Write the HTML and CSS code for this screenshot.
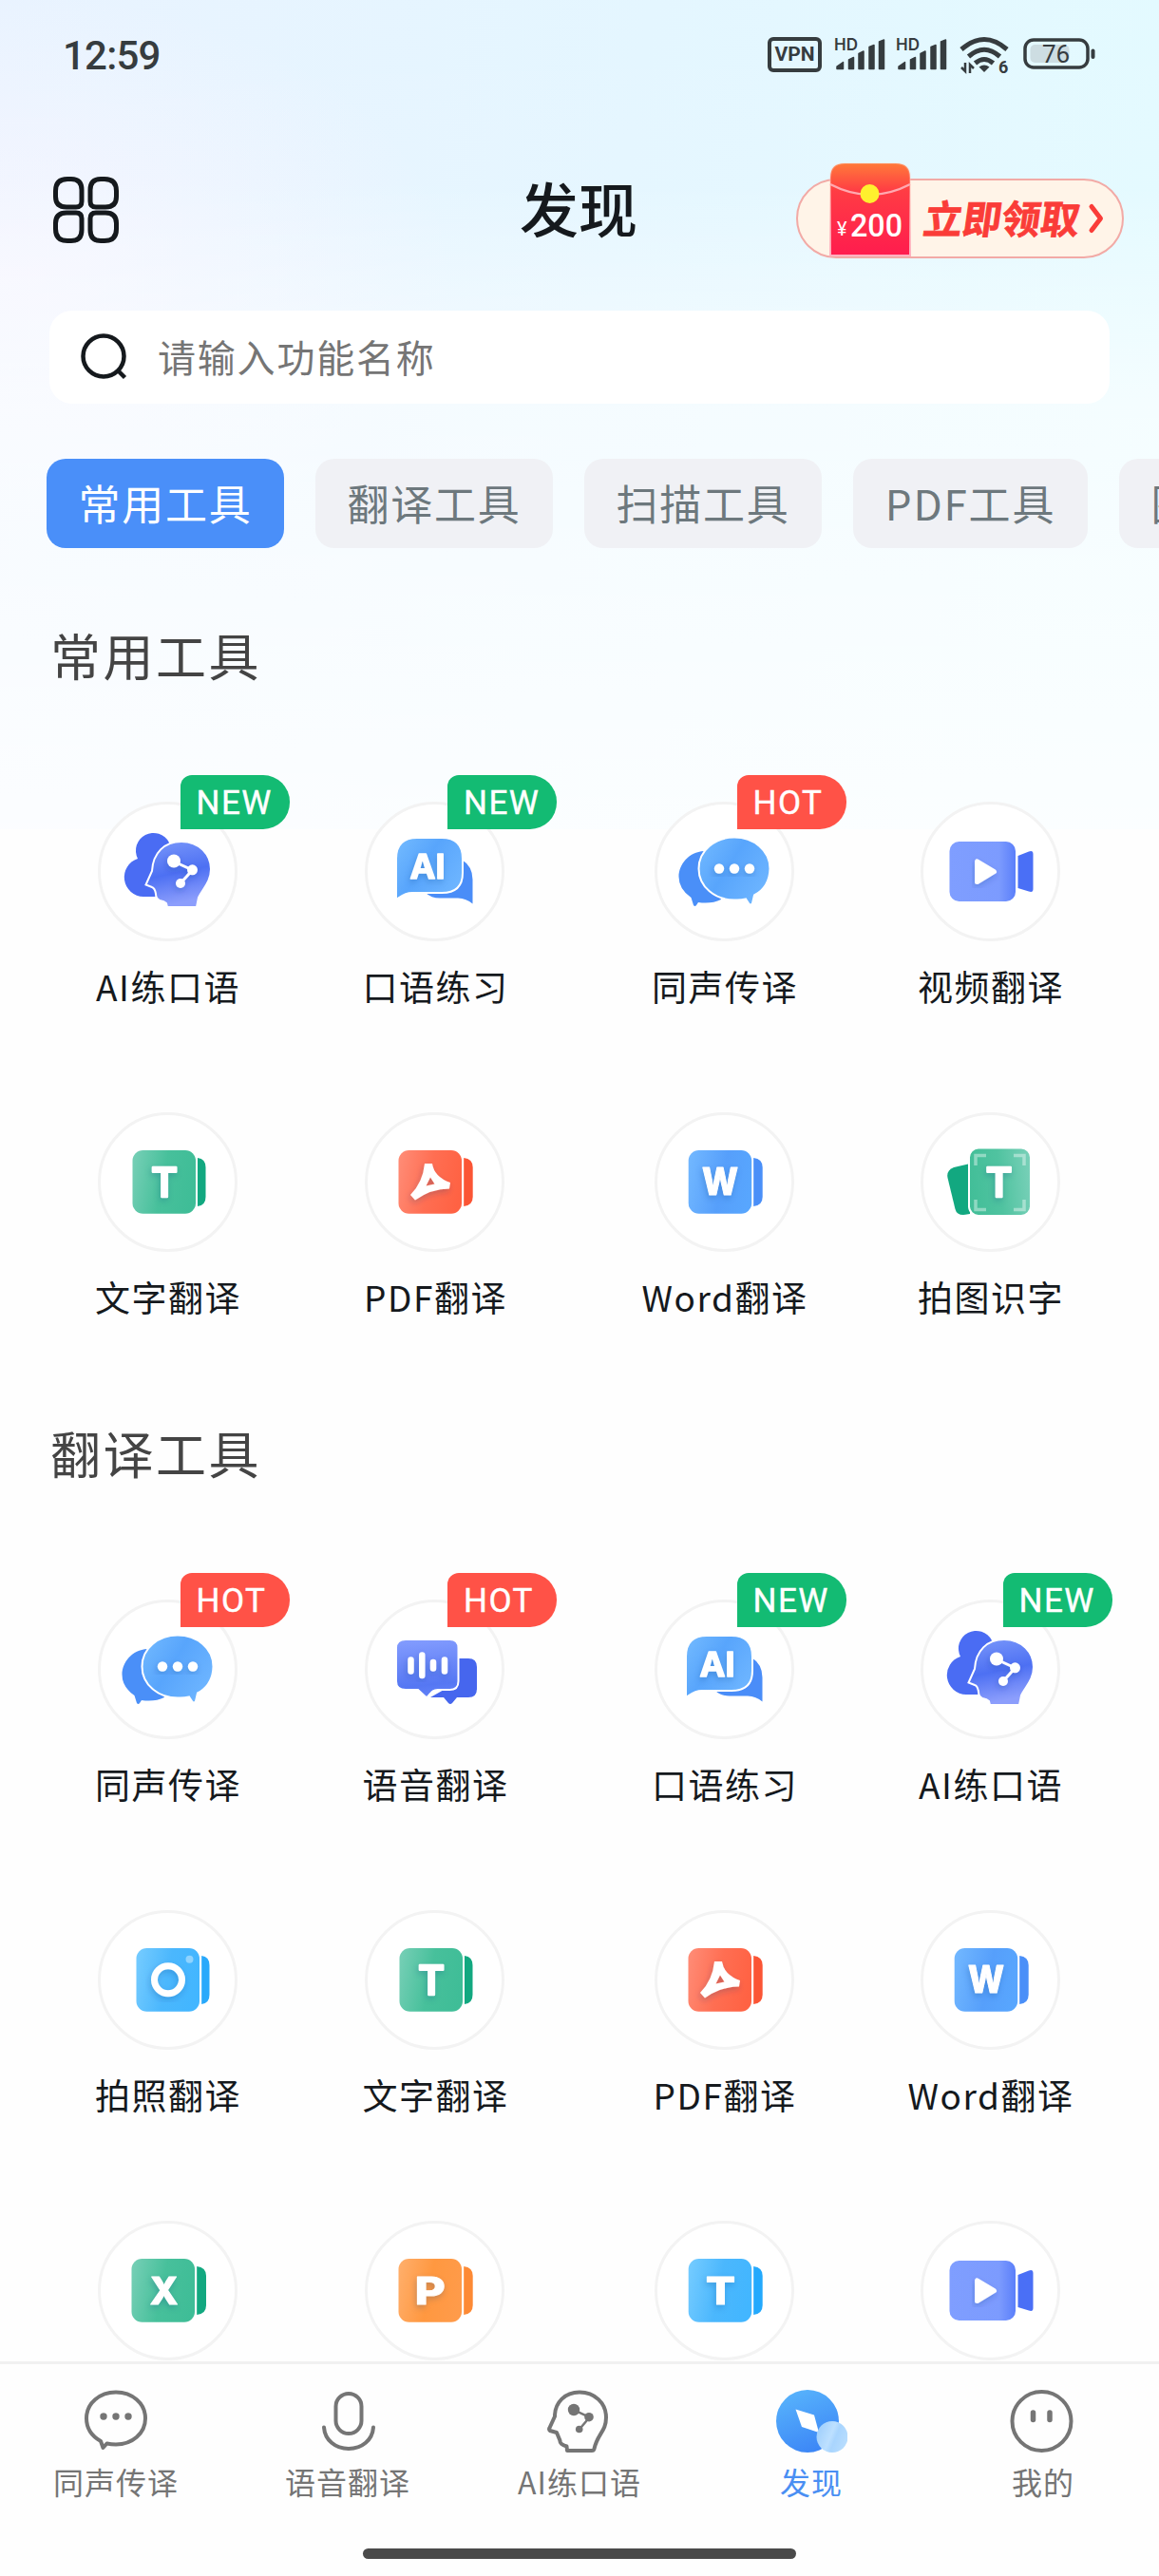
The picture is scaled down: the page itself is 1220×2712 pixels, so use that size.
FILE: index.html
```html
<!DOCTYPE html>
<html lang="zh-CN">
<head>
    <meta charset="UTF-8">
    <meta name="viewport" content="width=device-width, initial-scale=1.0">
    <title>发现</title>
    <link rel="stylesheet" href="styles.css">
</head>
<body>
    <!-- icon set -->
    <svg class="sprite" width="0" height="0">
        <defs>
            <linearGradient id="g-head" x1="0" y1="0" x2="0.2" y2="1">
                <stop offset="0" stop-color="#7a98fa"/><stop offset="0.55" stop-color="#4d70f3"/><stop offset="1" stop-color="#8c9efc"/>
            </linearGradient>
            <linearGradient id="g-sky" x1="0" y1="0" x2="1" y2="0.6">
                <stop offset="0" stop-color="#74bbff"/><stop offset="0.5" stop-color="#58a5fc"/><stop offset="1" stop-color="#6cb4ff"/>
            </linearGradient>
            <linearGradient id="g-voice" x1="0.3" y1="0" x2="0.4" y2="1">
                <stop offset="0" stop-color="#839cfe"/><stop offset="0.8" stop-color="#5577f3"/><stop offset="1" stop-color="#6282f8"/>
            </linearGradient>
            <linearGradient id="g-video">
                <stop offset="0" stop-color="#7f9eff"/><stop offset="0.75" stop-color="#7c9bfe"/><stop offset="1" stop-color="#5b7ffa"/>
            </linearGradient>
            <linearGradient id="g-green" x1="0" y1="0.3" x2="1" y2="0.5">
                <stop offset="0" stop-color="#73ceb4"/><stop offset="0.5" stop-color="#47c09b"/><stop offset="1" stop-color="#3fbd97"/>
            </linearGradient>
            <linearGradient id="g-ocr" x1="0" y1="0.5" x2="1" y2="0.4">
                <stop offset="0" stop-color="#42be98"/><stop offset="0.5" stop-color="#50c3a0"/><stop offset="1" stop-color="#78d0b8"/>
            </linearGradient>
            <linearGradient id="g-red" x1="0" y1="0.3" x2="1" y2="0.5">
                <stop offset="0" stop-color="#ff8a74"/><stop offset="0.5" stop-color="#ff6e52"/><stop offset="1" stop-color="#ff6243"/>
            </linearGradient>
            <linearGradient id="g-blue" x1="0" y1="0.3" x2="1" y2="0.5">
                <stop offset="0" stop-color="#70b6ff"/><stop offset="0.55" stop-color="#569ffb"/><stop offset="1" stop-color="#58a6fe"/>
            </linearGradient>
            <linearGradient id="g-cyan" x1="0" y1="0.3" x2="1" y2="0.5">
                <stop offset="0" stop-color="#72caff"/><stop offset="0.5" stop-color="#4bb7fd"/><stop offset="1" stop-color="#42b6ff"/>
            </linearGradient>
            <linearGradient id="g-orange" x1="0" y1="0.3" x2="1" y2="0.5">
                <stop offset="0" stop-color="#ffad68"/><stop offset="0.5" stop-color="#ff9840"/><stop offset="1" stop-color="#ff9b4a"/>
            </linearGradient>
            <linearGradient id="g-compass" x1="0.2" y1="0" x2="0.6" y2="1">
                <stop offset="0" stop-color="#58b4fc"/><stop offset="1" stop-color="#3c86f6"/>
            </linearGradient>
            <linearGradient id="g-lens" x1="0" y1="0.3" x2="1" y2="0.7">
                <stop offset="0" stop-color="#9fcffc"/><stop offset="0.45" stop-color="#bde0ff"/><stop offset="0.6" stop-color="#a9d5fe"/><stop offset="1" stop-color="#b9defe"/>
            </linearGradient>
            <linearGradient id="g-packet" x1="0" y1="0" x2="0" y2="1">
                <stop offset="0" stop-color="#ff7a3a"/><stop offset="0.3" stop-color="#ff3c44"/><stop offset="1" stop-color="#ff1c4e"/>
            </linearGradient>
            <linearGradient id="g-shade" x1="0" y1="0" x2="0" y2="1">
                <stop offset="0" stop-color="#ffc9b8" stop-opacity="0.2"/><stop offset="1" stop-color="#ffb0c0"/>
            </linearGradient>
            <filter id="soft" x="-30%" y="-30%" width="160%" height="160%">
                <feDropShadow dx="-1" dy="3" stdDeviation="3" flood-color="#003a80" flood-opacity="0.22"/>
            </filter>
        </defs>

        <symbol id="i-head" viewBox="0 0 147 147">
            <path fill="#4a6cf3" d="M48 100A20.500 20.500 0 0 1 42 60A18.500 18.500 0 0 1 75 43L66 100Z"/>
            <path fill="url(#g-head)" stroke="#fff" stroke-width="2" d="M73 111L72 107Q70 105 65 104Q61 102 61 97Q60 91 57 90L50.500 87.500L57 73C58 54 70 42 88 42C107 42 119 56 119 71C119 85 110 92 106 101L104 111Z"/>
            <g filter="url(#soft)">
                <path fill="none" stroke="#fff" stroke-width="3" d="M80 63L99.500 72L87 86"/>
                <circle cx="80" cy="62.500" r="7" fill="#fff"/><circle cx="99.500" cy="71.800" r="5.500" fill="#fff"/><circle cx="87" cy="86" r="5" fill="#fff"/>
            </g>
        </symbol>
        <symbol id="i-ai" viewBox="0 0 147 147">
            <path fill="#4a8df8" d="M102 61Q113.500 68 113.500 82V107.500Q107 102 98 101.500H79Q70 101.500 64 96L95 88Z"/>
            <path fill="url(#g-sky)" stroke="#fff" stroke-width="2" d="M33 102V60Q33 38 55 38H81Q103 38 103 60V75Q103 96 81 96H50Q43 96 36 101Q34 103 33 102Z"/>
        </symbol>
        <symbol id="i-chat" viewBox="0 0 147 147">
            <path fill="#4a8ff8" d="M52 52C36 53 25.500 66 25.500 79Q25.500 92 38.500 101L41 109Q42.500 111 44 109L46 106Q60 108 70 103Z"/>
            <path fill="url(#g-sky)" stroke="#fff" stroke-width="2" d="M84 37.500C104 37.500 121.500 51 121.500 70.500Q121 90 105 98.500L103 107Q101 110 99 107L96 102.500Q90 104 84 103.500C64 103.500 46.500 90 46.500 70.500C46.500 51 64 37.500 84 37.500Z"/>
            <g fill="#fff" filter="url(#soft)"><circle cx="68" cy="70.500" r="5.200"/><circle cx="84" cy="70.500" r="5.200"/><circle cx="100" cy="70.500" r="5.200"/></g>
        </symbol>
        <symbol id="i-video" viewBox="0 0 147 147">
            <rect x="30.500" y="42" width="69.500" height="63" rx="10" fill="url(#g-video)"/>
            <path fill="#4a6ff6" d="M102.500 57L114 52.500Q118.500 51 118.500 55V92Q118.500 96 114 94.500L102.500 91Z"/>
            <path fill="#fff" stroke="#fff" stroke-width="5" stroke-linejoin="round" filter="url(#soft)" d="M59.500 63V84.500L77.500 73.700Z"/>
        </symbol>
        <symbol id="i-text" viewBox="0 0 147 147">
            <path fill="#12a880" d="M105 48Q113.500 49 113.500 58V89Q113.500 98 105 99Z"/>
            <rect x="36.500" y="40" width="66.500" height="66.700" rx="11" fill="url(#g-green)"/>
        </symbol>
        <symbol id="i-pdf" viewBox="0 0 147 147">
            <path fill="#fb5535" d="M104.200 48Q113.700 49 113.700 58V89Q113.700 98 104.200 99Z"/>
            <rect x="35.500" y="40" width="66.500" height="66.700" rx="11" fill="url(#g-red)"/>
            <path fill="#fff" fill-rule="evenodd" filter="url(#soft)" d="M63 54H71Q73 68 90 74L89 80.500Q70 80.500 53 92.500L48 87Q61 74 63 54ZM69 68.500L64.500 77.500L73.500 75.500Z"/>
        </symbol>
        <symbol id="i-word" viewBox="0 0 147 147">
            <path fill="#4a8ff8" d="M104.200 48Q113.700 49 113.700 58V89Q113.700 98 104.200 99Z"/>
            <rect x="35.700" y="40" width="66.500" height="66.700" rx="11" fill="url(#g-blue)"/>
        </symbol>
        <symbol id="i-ocr" viewBox="0 0 147 147">
            <path fill="#12a880" d="M35 58L52 54V107L45 108Q38 108 36.500 102L28.500 69Q27 61 35 58Z"/>
            <rect x="51" y="37.500" width="65" height="71.500" rx="10" fill="url(#g-ocr)" stroke="#fff" stroke-width="2"/>
            <path fill="none" stroke="#fff" stroke-opacity="0.4" stroke-width="3.500" d="M58 56V45.500H69M98 45.500H109V56M58 92V102.500H69M98 102.500H109V92"/>
        </symbol>
        <symbol id="i-voice" viewBox="0 0 147 147">
            <path fill="#4666ee" d="M98 62H109Q118 62 118 71V94Q118 103 109 103H97L92 109Q90 111 88 109L83 103H69L92 90Z"/>
            <path fill="url(#g-voice)" stroke="#fff" stroke-width="2" d="M43 42H89.500Q98.500 42 98.500 51V86Q98.500 95 89.500 95H77Q72 95 69 99L66.500 102Q65 103.500 63.500 102L56 95H43Q33 95 33 86V51Q33 42 43 42Z"/>
            <path stroke="#fff" stroke-width="6.500" stroke-linecap="round" d="M48.500 63.500V75.500M60.300 58.500V80M72 66V72.500M84 63.500V75.500" filter="url(#soft)"/>
        </symbol>
        <symbol id="i-camera" viewBox="0 0 147 147">
            <path fill="#29a9fb" d="M109.200 48Q117.500 49 117.500 58V89Q117.500 98 109.200 99Z"/>
            <rect x="40.500" y="40" width="66.500" height="66.700" rx="11" fill="url(#g-cyan)"/>
            <circle cx="74" cy="73.300" r="14.500" fill="none" stroke="#fff" stroke-width="7" filter="url(#soft)"/>
            <circle cx="96.500" cy="51.700" r="4" fill="#fff" fill-opacity="0.4"/>
        </symbol>
        <symbol id="i-excel" viewBox="0 0 147 147">
            <path fill="#12a880" d="M104.200 48Q114 49 114 58V89Q114 98 104.200 99Z"/>
            <rect x="35.500" y="40" width="66.500" height="66.700" rx="11" fill="url(#g-green)"/>
        </symbol>
        <symbol id="i-ppt" viewBox="0 0 147 147">
            <path fill="#fd8a35" d="M104.200 48Q113.700 49 113.700 58V89Q113.700 98 104.200 99Z"/>
            <rect x="35.500" y="40" width="66.500" height="66.700" rx="11" fill="url(#g-orange)"/>
        </symbol>
        <symbol id="i-txt" viewBox="0 0 147 147">
            <path fill="#23a9fd" d="M104.200 48Q113.700 49 113.700 58V89Q113.700 98 104.200 99Z"/>
            <rect x="35.700" y="40" width="66.500" height="66.700" rx="11" fill="url(#g-cyan)"/>
        </symbol>
        <symbol id="i-signal" viewBox="0 0 56 38">
            <path fill="#363c3f" stroke="#363c3f" stroke-width="1.500" stroke-linejoin="round" d="M3 34.500V32L9.500 27.500V34.500ZM15.500 34.500V25L20.500 22.500V34.500ZM26 34.500V18.500L31 16V34.500ZM37 34.500V11.500L42 9.500V34.500ZM47.500 34.500V6L52.500 4V34.500Z"/>
        </symbol>
    </svg>

    <div class="app">
        <div class="status-bar">
            <div class="time">12:59</div>
            <div class="status-icons">
                <div class="vpn">VPN</div>
                <svg class="signal" width="56" height="38"><use href="#i-signal"/><text class="hd" x="0" y="15">HD</text></svg>
                <svg class="signal" width="56" height="38"><use href="#i-signal"/><text class="hd" x="0" y="15">HD</text></svg>
                <svg class="wifi" width="52" height="40" viewBox="0 0 52 40">
                    <g fill="none" stroke="#363c3f" stroke-width="5">
                        <path d="M2 14Q26 -7 50 14"/>
                        <path d="M9.500 21.500Q26 7 42.500 21.500"/>
                        <path d="M16.500 28.500Q26 20.500 35.500 28.500"/>
                    </g>
                    <path fill="#363c3f" d="M20.500 32.500Q26 28.500 31.500 32.500L26 38Z"/>
                    <path fill="none" stroke="#363c3f" stroke-width="2.500" d="M2 33L6 37V28M11 39V30L15 34"/>
                    <text x="41" y="38.500" font-family="Roboto" font-size="18" font-weight="700" fill="#363c3f">6</text>
                </svg>
                <svg class="battery" width="76" height="34" viewBox="0 0 76 34">
                    <rect x="2" y="2" width="66" height="29" rx="9" fill="none" stroke="#363c3f" stroke-width="3.500"/>
                    <rect x="7.500" y="7" width="41" height="19" rx="5" fill="#cddde2"/>
                    <rect x="71.500" y="11.500" width="4" height="10.500" rx="2" fill="#363c3f"/>
                    <text x="34.500" y="25.500" text-anchor="middle" font-family="Roboto" font-size="26" fill="#363c3f">76</text>
                </svg>
            </div>
        </div>

        <header class="header">
            <svg class="menu-icon" width="69" height="70" viewBox="0 0 69 70" fill="none" stroke="#15191d" stroke-width="5">
                <path d="M15 2.500H19Q30 2.500 30 14V26Q30 32 24 32H14Q2.500 32 2.500 21V15Q2.500 2.500 15 2.500Z"/>
                <path d="M54 2.500H50Q39 2.500 39 14V26Q39 32 45 32H55Q66.500 32 66.500 21V15Q66.500 2.500 54 2.500Z"/>
                <path d="M15 67.500H19Q30 67.500 30 56V44Q30 38 24 38H14Q2.500 38 2.500 49V55Q2.500 67.500 15 67.500Z"/>
                <path d="M54 67.500H50Q39 67.500 39 56V44Q39 38 45 38H55Q66.500 38 66.500 49V55Q66.500 67.500 54 67.500Z"/>
            </svg>
            <h1>发现</h1>
            <div class="claim">
                <svg class="packet" width="86" height="99" viewBox="0 0 86 99">
                    <path fill="url(#g-packet)" stroke="url(#g-shade)" stroke-width="2" d="M1 98V16Q1 1 16 1H70Q85 1 85 16V98Z"/>
                    <path fill="none" stroke="#ffa9b0" stroke-width="2.500" d="M1 23Q43 45 85 23"/>
                    <circle cx="42.500" cy="33" r="10" fill="#fff02e"/>
                    <text x="8" y="77" font-family="Roboto" font-size="20" fill="#fff">¥</text>
                    <text x="22" y="78" font-family="Roboto" font-size="34" font-weight="500" textLength="55" lengthAdjust="spacingAndGlyphs" fill="#fff">200</text>
                </svg>
                <span class="claim-text">立即领取</span>
                <svg class="chevron" width="18" height="34" viewBox="0 0 18 34"><path fill="none" stroke="#fa3c38" stroke-width="5" stroke-linejoin="round" stroke-linecap="round" d="M4 4.500L13.500 17L4 29.500"/></svg>
            </div>
        </header>

        <div class="search">
            <svg width="50" height="50" viewBox="0 0 50 50" fill="none" stroke="#15191d" stroke-width="4.500"><circle cx="24" cy="24" r="21.500"/><path d="M38 38L46.500 46.500"/></svg>
            <span>请输入功能名称</span>
        </div>

        <div class="tabs">
            <div class="tab active">常用工具</div>
            <div class="tab">翻译工具</div>
            <div class="tab">扫描工具</div>
            <div class="tab tab-pdf">PDF工具</div>
            <div class="tab">图片工具</div>
        </div>

        <main class="content">
            <h2>常用工具</h2>
            <div class="tools">
                <div class="tool">
                    <div class="circle"><svg><use href="#i-head"/></svg><span class="badge new">NEW</span></div>
                    <div class="label">AI练口语</div>
                </div>
                <div class="tool">
                    <div class="circle"><svg><use href="#i-ai"/><text class="glyph glyph-ai" x="66" y="80.500">AI</text></svg><span class="badge new">NEW</span></div>
                    <div class="label">口语练习</div>
                </div>
                <div class="tool">
                    <div class="circle"><svg><use href="#i-chat"/></svg><span class="badge hot">HOT</span></div>
                    <div class="label">同声传译</div>
                </div>
                <div class="tool">
                    <div class="circle"><svg><use href="#i-video"/></svg></div>
                    <div class="label">视频翻译</div>
                </div>
                <div class="tool">
                    <div class="circle"><svg><use href="#i-text"/><text class="glyph glyph-t" x="70" y="89">T</text></svg></div>
                    <div class="label">文字翻译</div>
                </div>
                <div class="tool">
                    <div class="circle"><svg><use href="#i-pdf"/></svg></div>
                    <div class="label">PDF翻译</div>
                </div>
                <div class="tool">
                    <div class="circle"><svg><use href="#i-word"/><text class="glyph glyph-heavy" x="69" y="87" textLength="38" lengthAdjust="spacingAndGlyphs">W</text></svg></div>
                    <div class="label">Word翻译</div>
                </div>
                <div class="tool">
                    <div class="circle"><svg><use href="#i-ocr"/><text class="glyph glyph-t" x="82.700" y="89">T</text></svg></div>
                    <div class="label">拍图识字</div>
                </div>
            </div>

            <h2>翻译工具</h2>
            <div class="tools">
                <div class="tool">
                    <div class="circle"><svg><use href="#i-chat"/></svg><span class="badge hot">HOT</span></div>
                    <div class="label">同声传译</div>
                </div>
                <div class="tool">
                    <div class="circle"><svg><use href="#i-voice"/></svg><span class="badge hot">HOT</span></div>
                    <div class="label">语音翻译</div>
                </div>
                <div class="tool">
                    <div class="circle"><svg><use href="#i-ai"/><text class="glyph glyph-ai" x="66" y="80.500">AI</text></svg><span class="badge new">NEW</span></div>
                    <div class="label">口语练习</div>
                </div>
                <div class="tool">
                    <div class="circle"><svg><use href="#i-head"/></svg><span class="badge new">NEW</span></div>
                    <div class="label">AI练口语</div>
                </div>
                <div class="tool">
                    <div class="circle"><svg><use href="#i-camera"/></svg></div>
                    <div class="label">拍照翻译</div>
                </div>
                <div class="tool">
                    <div class="circle"><svg><use href="#i-text"/><text class="glyph glyph-t" x="70" y="89">T</text></svg></div>
                    <div class="label">文字翻译</div>
                </div>
                <div class="tool">
                    <div class="circle"><svg><use href="#i-pdf"/></svg></div>
                    <div class="label">PDF翻译</div>
                </div>
                <div class="tool">
                    <div class="circle"><svg><use href="#i-word"/><text class="glyph glyph-heavy" x="69" y="87" textLength="38" lengthAdjust="spacingAndGlyphs">W</text></svg></div>
                    <div class="label">Word翻译</div>
                </div>
                <div class="tool">
                    <div class="circle"><svg><use href="#i-excel"/><text class="glyph glyph-heavy" x="69.500" y="88">X</text></svg></div>
                </div>
                <div class="tool">
                    <div class="circle"><svg><use href="#i-ppt"/><text class="glyph glyph-heavy" x="68.700" y="88" textLength="32" lengthAdjust="spacingAndGlyphs">P</text></svg></div>
                </div>
                <div class="tool">
                    <div class="circle"><svg><use href="#i-txt"/><text class="glyph glyph-heavy" x="69.500" y="88" textLength="31" lengthAdjust="spacingAndGlyphs">T</text></svg></div>
                </div>
                <div class="tool">
                    <div class="circle"><svg><use href="#i-video"/></svg></div>
                </div>
            </div>
        </main>

        <nav class="nav">
            <div class="nav-items">
                <div class="nav-item">
                    <svg viewBox="0 0 76 68" fill="none" stroke="#757575" stroke-width="4" stroke-linejoin="round">
                        <path d="M38 3.500C55 3.500 69 15 69 31C69 47 55 58.500 38 58.500Q33 58.500 28.500 57.500L24.500 62L22 55Q7 46.500 7 31C7 15 21 3.500 38 3.500Z"/>
                        <g fill="#757575" stroke="none"><circle cx="25" cy="29" r="3.700"/><circle cx="38" cy="29" r="3.700"/><circle cx="51" cy="29" r="3.700"/></g>
                    </svg>
                    <span>同声传译</span>
                </div>
                <div class="nav-item">
                    <svg viewBox="0 0 76 68" fill="none" stroke="#757575" stroke-width="4" stroke-linecap="round">
                        <rect x="25.500" y="5" width="27" height="42" rx="13.500"/>
                        <path d="M13 40.500C14 54 25 63 39 63C53 63 64 54 65 40.500"/>
                    </svg>
                    <span>语音翻译</span>
                </div>
                <div class="nav-item">
                    <svg viewBox="0 0 76 68" fill="none" stroke="#757575" stroke-width="4" stroke-linejoin="round">
                        <path d="M25 65L24.500 60.500Q17 58 17.500 54.500L14 46L7 44Q5.500 43 6.500 41L12 29C12 14 23 3.500 38 3.500C54 3.500 66 15 66 30C66 45 57 47 53.500 63Q53 65 51 65Z"/>
                        <path stroke-width="2.500" d="M32 22L48.500 30L37.500 43"/>
                        <g fill="#757575" stroke="none"><circle cx="32" cy="22" r="6.200"/><circle cx="48" cy="29.700" r="4.800"/><circle cx="37.700" cy="42.500" r="3.800"/></g>
                    </svg>
                    <span>AI练口语</span>
                </div>
                <div class="nav-item current">
                    <svg viewBox="0 0 76 68">
                        <circle cx="34" cy="34" r="33" fill="url(#g-compass)"/>
                        <path fill="#fff" d="M21.500 21.500L41 27.500L46 46L28 40Z"/>
                        <circle cx="60" cy="50.500" r="16.500" fill="url(#g-lens)"/>
                    </svg>
                    <span>发现</span>
                </div>
                <div class="nav-item">
                    <svg viewBox="0 0 76 68" fill="none" stroke="#757575" stroke-width="4">
                        <circle cx="36.500" cy="34" r="31"/>
                        <path stroke-width="5.500" stroke-linecap="round" d="M27.500 25V32.500M45 25V32.500"/>
                    </svg>
                    <span>我的</span>
                </div>
            </div>
            <div class="home-bar"></div>
        </nav>
    </div>
</body>
</html>
```

FILE: styles.css
```css
* {
    box-sizing: border-box;
}
body {
    margin: 0;
    background: #fefefe;
    font-family: "Noto Sans CJK SC", sans-serif;
}
.sprite {
    position: absolute;
}
.app {
    display: flex;
    flex-direction: column;
    width: 1220px;
    height: 2712px;
    overflow: hidden;
    background:
        linear-gradient(180deg, rgba(255, 255, 255, 0) 0, rgba(255, 255, 255, 0.05) 200px, rgba(255, 255, 255, 0.62) 430px, rgba(255, 255, 255, 0.85) 873px),
        radial-gradient(ellipse 480px 300px at 0 290px, rgba(246, 246, 255, 0.95), rgba(246, 246, 255, 0)),
        linear-gradient(100deg, #e9f3ff 0, #e4f6ff 50%, #e3fbff 100%);
    background-size: 100% 873px;
    background-repeat: no-repeat;
}

/* status bar */
.status-bar {
    display: flex;
    justify-content: space-between;
    align-items: center;
    height: 114px;
    padding: 0 67px 0 66px;
    color: #363c3f;
}
.time {
    font-family: Roboto, sans-serif;
    font-size: 42px;
    font-weight: 500;
    letter-spacing: -0.800px;
    padding-top: 2px;
}
.status-icons {
    display: flex;
    align-items: center;
}
.vpn {
    width: 57px;
    height: 37px;
    border: 4px solid #363c3f;
    border-radius: 6px;
    margin-right: 13px;
    font: 700 21px/29px Roboto, sans-serif;
    text-align: center;
}
.signal {
    margin-right: 9px;
}
.hd {
    font: 600 17px Inter, sans-serif;
    fill: #363c3f;
}
.wifi {
    margin: 2px 15px 0 2px;
}

/* header */
.header {
    display: flex;
    justify-content: space-between;
    align-items: center;
    height: 213px;
    padding: 0 37px 0 56px;
}
.header h1 {
    flex: 1;
    margin: -6px 0 0 -5px;
    padding-left: 427px;
    font-size: 62px;
    font-weight: 500;
    line-height: 80px;
    color: #15191d;
    white-space: nowrap;
}
.claim {
    position: relative;
    display: flex;
    align-items: center;
    width: 345px;
    height: 84px;
    margin-top: 18px;
    padding-left: 133px;
    border: 2px solid #f2aaa6;
    border-radius: 42px;
    background: #fff4e8;
}
.packet {
    position: absolute;
    left: 33px;
    bottom: 0;
}
.claim-text {
    margin-top: -3px;
    font-size: 41px;
    font-weight: 700;
    line-height: 60px;
    color: #fa3c38;
    -webkit-text-stroke: 0.800px #fa3c38;
    transform: skewX(-8deg);
}
.chevron {
    margin-left: 8px;
}

/* search */
.search {
    display: flex;
    align-items: center;
    flex-shrink: 0;
    height: 98px;
    margin: 0 52px;
    padding-left: 33px;
    border-radius: 24px;
    background: #fff;
}
.search span {
    margin: -3px 0 0 31px;
    font-size: 40px;
    letter-spacing: 1.800px;
    color: #757575;
}

/* tabs */
.tabs {
    display: flex;
    flex-shrink: 0;
    gap: 33px;
    margin: 58px 0 0 49px;
}
.tab {
    display: flex;
    justify-content: center;
    align-items: center;
    flex-shrink: 0;
    width: 250px;
    height: 94px;
    padding-bottom: 3px;
    border-radius: 20px;
    background: #f0f1f5;
    font-size: 44px;
    letter-spacing: 1.800px;
    color: #6d787d;
}
.tab-pdf {
    width: 247px;
}
.tab.active {
    background: #4a8ff9;
    color: #fff;
}

/* tools */
.content {
    flex: 1;
    overflow: hidden;
}
.content h2 {
    margin: 82px 0 125px 53px;
    font-size: 53px;
    font-weight: 400;
    line-height: 60px;
    letter-spacing: 2.500px;
    color: #444;
}
.content .tools + h2 {
    margin-top: 109px;
}
.tools {
    display: grid;
    grid-template-columns: 281px 282px 327px 233px;
    row-gap: 108px;
    margin-left: 35.500px;
}
.tool {
    display: flex;
    flex-direction: column;
    align-items: center;
}
.circle {
    position: relative;
    width: 147px;
    height: 147px;
    border: 3px solid #f3f3f3;
    border-radius: 50%;
    background: #fff;
}
.circle svg {
    display: block;
    width: 147px;
    height: 147px;
    margin: -3px;
}
.glyph {
    font-family: Inter, sans-serif;
    text-anchor: middle;
    fill: #fff;
    stroke: #fff;
    stroke-linejoin: round;
    filter: drop-shadow(-1px 3px 3px rgba(0, 58, 128, 0.22));
}
.glyph-ai {
    font-size: 36px;
    font-weight: 700;
    stroke-width: 1.500px;
}
.glyph-t {
    font-size: 42px;
    font-weight: 600;
    stroke-width: 2.500px;
}
.glyph-heavy {
    font-size: 39px;
    font-weight: 800;
    stroke-width: 1px;
}
.badge {
    position: absolute;
    top: -31px;
    left: 84px;
    width: 115px;
    height: 57px;
    padding-left: 17px;
    border-radius: 12px 28px 28px 0;
    font: 400 35px/59px Roboto, sans-serif;
    letter-spacing: 1.500px;
    color: #fff;
    -webkit-text-stroke: 0.400px #fff;
}
.badge.new {
    background: #13bb73;
}
.badge.hot {
    background: #ff5247;
}
.label {
    margin-top: 22px;
    padding-left: 2px;
    font-size: 37px;
    line-height: 50px;
    letter-spacing: 1.500px;
    color: #15191d;
    white-space: nowrap;
}

/* bottom nav */
.nav {
    flex-shrink: 0;
    height: 226px;
    border-top: 3px solid #f1f1f1;
    background: #fefefe;
}
.nav-items {
    display: flex;
    padding-top: 26px;
}
.nav-item {
    display: flex;
    flex-direction: column;
    align-items: center;
    width: 244px;
    font-size: 32px;
    line-height: 44px;
    letter-spacing: 1px;
    color: #757575;
}
.nav-item svg {
    width: 76px;
    height: 68px;
    margin-bottom: 7px;
}
.nav-item.current {
    color: #4a8ff3;
}
.home-bar {
    width: 456px;
    height: 11px;
    margin: 49px auto 0;
    border-radius: 6px;
    background: #4a4a4a;
}
```
